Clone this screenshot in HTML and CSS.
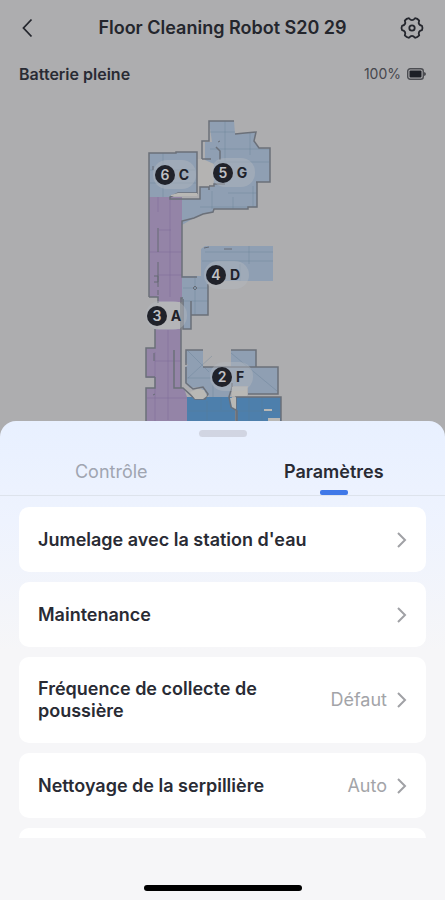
FILE: index.html
```html
<!DOCTYPE html>
<html lang="fr">
<head>
    <meta charset="UTF-8">
    <meta name="viewport" content="width=device-width, initial-scale=1.0">
    <title>Floor Cleaning Robot S20 29</title>
    <link rel="stylesheet" href="styles.css">
</head>
<body>

<div class="app">
    <header class="header">
        <button class="icon-button" aria-label="Retour">
            <svg width="24" height="24" viewBox="0 0 24 24" fill="none" stroke="#24262d" stroke-width="1.800"><path d="M15.500 3.500 7.500 12l8 8.500"/></svg>
        </button>
        <h1>Floor Cleaning Robot S20 29</h1>
        <button class="icon-button" aria-label="Réglages">
            <svg width="24" height="24" viewBox="0 0 24 24" fill="none" stroke="#24262d" stroke-width="1.800" stroke-linejoin="round">
                <path d="M22 9.800Q23 12 22 14.200Q17.500 15.200 19.200 19.400Q17.500 21.500 15 21.800Q12 18 9 21.800Q6.500 21.500 4.800 19.400Q6.500 15.200 2 14.200Q1 12 2 9.800Q6.500 8.800 4.800 4.600Q6.500 2.500 9 2.200Q12 6 15 2.200Q17.500 2.500 19.200 4.600Q17.500 8.800 22 9.800Z"/>
                <circle cx="12" cy="12" r="2.700"/>
            </svg>
        </button>
    </header>

    <div class="status">
        <span class="status-text">Batterie pleine</span>
        <span class="battery">100%
            <svg width="19" height="12" viewBox="0 0 19 12">
                <rect x="0.700" y="0.700" width="15.600" height="10.600" rx="2.500" fill="none" stroke="#4c4d52" stroke-width="1.400"/>
                <rect x="2.500" y="2.500" width="12" height="7" rx="1" fill="#1d1f26"/>
                <path d="M17 4q2 .5 2 2t-2 2z" fill="#4c4d52"/>
            </svg>
        </span>
    </div>

    <div class="map">
        <svg width="161" height="311" viewBox="142 110 161 311" role="img" aria-label="Plan">
            <!-- floor -->
            <path class="gap" d="M197 159h16v27h-16zM158 300h24v30h-24z"/>
            <path class="room" d="M149 153h27v-1h21v41h-19l-8 3v2h-21z"/>
            <path class="room" d="M209 121h25l1 13 10-1 11-1-2 9 5 7 11 1v33h-13v25h-9v2h-34l-1 3-10 2-9 4-12 7v-26h18v-12h14v-23l-9-4v-18h7z"/>
            <path class="room" d="M201 249l4-3h68v35h-65v34h-17v14h-8v-27h-2v-26h20z"/>
            <path class="room" d="M186 350h17v17h28v-17h25v17h22v27h-30v-8h-16l-2 11h-21l-9-10-10 1-5-5v-16l3-2-3-3z"/>
            <path class="hall" d="M149 197h33v105h-24v-5h-9z"/>
            <path class="hall" d="M155 329h26v59h3l3 9v24h-41v-33h9v-10h-9v-30h9z"/>
            <path class="dark" d="M187 397h45v4l3 9v11h-48zM236 397h45v24h-45z"/>

            <!-- floor joints -->
            <path class="joint" d="M210 132h25M210 149h60M217 162h52M228 193h29M200 207h57M225 121v40M250 133v22M212 191v18M233 197v12M253 186v21M163 153v44M150 170h45M150 183h46M205 252h68M202 261h71M183 288h25M183 301h25M195 276v39M249 246v18M240 264v17M187 378h24M187 350l22 22M188 378l24-22M231 353l46 38M213 383v14M249 398v23M262 397v24M207 401v20M221 397v13M188 411h46M237 411h43"/>
            <path class="hall-joint" d="M158 197v15M170 197v100M149 252h33M159 230h12M158 275h24M168 330v90M155 361h26M147 398h40M155 352v69"/>

            <!-- walls -->
            <path class="wall" d="M149 297V153h27v-1h21v41h-19l-8 4v2h30v-12h9v3M202 159v-18h7v-20h25M202 159h9M235 134l10-1 11-1-2 9 5 7h11v34h-14M257 182v25h-9v2h-34l-1 3-10 2-9 4-12 3v56h15M149 297h9v6M209 186h5v-2h11M216 147l4 4v9"/>
            <path class="wall" d="M208 284v31h-17v-14M191 315v14h-8v-30M183 298h-2v90M155 329v19h-9v29h9M155 377v11h-9v33M174 350v38h9l12 11h10l3-5-5-7-10 2-7-6v-16M203 350h-17v15M203 367h53M231 350h25v17h22v27h-30M232 383v4l-3 10 2 10 6 4v10M236 421v-24h45v24"/>
            <path class="furniture" d="M158 228v24M158 262v25M154 276h4v6h-4M158 290v5M204 248l5-1M224 249h8M154 353v8M153 395l2-1M218 142l2-1M153 166v4"/>
            <path class="void" d="M171 195l7-2h19v3h-26zM190 392l8-3 6 1 3 6-4 3h-8zM232 387h15v9h-15zM230 398l2 9 4 2v-12zM264 409h8v2h-8zM268 421v-3h12v3z"/>
            <path class="furniture" d="M195 286l2 2-2 2-2-2z"/>

            <!-- room labels -->
            <g class="labels">
                <rect class="pill" x="153" y="160" width="43" height="29" rx="14"/>
                <rect class="pill" x="211" y="158" width="44" height="29" rx="14"/>
                <rect class="pill" x="204" y="261" width="45" height="28" rx="14"/>
                <rect class="pill" x="146" y="301" width="41" height="29" rx="14"/>
                <rect class="pill" x="210" y="362" width="43" height="29" rx="14"/>
                <circle cx="165" cy="175" r="10"/><text class="number" x="165" y="180">6</text><text x="184" y="180">C</text>
                <circle cx="223" cy="173" r="10"/><text class="number" x="223" y="178">5</text><text x="242" y="178">G</text>
                <circle cx="216" cy="275" r="10"/><text class="number" x="216" y="280">4</text><text x="235" y="280">D</text>
                <circle cx="157" cy="316" r="10"/><text class="number" x="157" y="321">3</text><text x="176" y="321">A</text>
                <circle cx="222" cy="377" r="10"/><text class="number" x="222" y="382">2</text><text x="240" y="382">F</text>
            </g>
        </svg>
    </div>

    <main class="sheet">
        <div class="handle"></div>
        <div class="tabs" role="tablist">
            <button class="tab" role="tab" aria-selected="false">Contrôle</button>
            <button class="tab active" role="tab" aria-selected="true">Paramètres</button>
        </div>
        <div class="list">
            <button class="card">
                <span class="card-title">Jumelage avec la station d'eau</span>
                <svg class="chevron" viewBox="0 0 10 16"><path d="M1 1l7 7-7 7"/></svg>
            </button>
            <button class="card">
                <span class="card-title">Maintenance</span>
                <svg class="chevron" viewBox="0 0 10 16"><path d="M1 1l7 7-7 7"/></svg>
            </button>
            <button class="card">
                <span class="card-title">Fréquence de collecte de poussière</span>
                <span class="card-value">Défaut</span>
                <svg class="chevron" viewBox="0 0 10 16"><path d="M1 1l7 7-7 7"/></svg>
            </button>
            <button class="card">
                <span class="card-title">Nettoyage de la serpillière</span>
                <span class="card-value">Auto</span>
                <svg class="chevron" viewBox="0 0 10 16"><path d="M1 1l7 7-7 7"/></svg>
            </button>
            <div class="card"></div>
        </div>
        <div class="home-bar"></div>
    </main>
</div>

</body>
</html>
```
FILE: styles.css
```css
* {
    box-sizing: border-box;
}
body {
    margin: 0;
    font-family: Inter, "Liberation Sans", sans-serif;
    color: #292b34;
    background-color: #adadaf;
}
button {
    border: none;
    background: none;
    padding: 0;
    font: inherit;
    color: inherit;
    cursor: pointer;
}
.app {
    display: flex;
    flex-direction: column;
    height: 100vh;
}
.header {
    display: flex;
    align-items: center;
    justify-content: space-between;
    height: 55px;
    padding: 0 21px 0 16px;
}
.header h1 {
    flex: 1;
    margin: 0;
    padding-left: 5px;
    text-align: center;
    font-size: 18px;
    font-weight: 600;
    color: #24262d;
}
.icon-button {
    display: flex;
}
.status {
    display: flex;
    align-items: center;
    justify-content: space-between;
    height: 37px;
    padding: 0 19px;
    font-size: 14px;
}
.status-text {
    font-size: 16px;
    font-weight: 600;
}
.battery {
    display: flex;
    align-items: center;
    gap: 6px;
    color: #46474d;
}
.map {
    display: flex;
    justify-content: center;
    padding-top: 18px;
}
.gap {
    fill: #b4b3b2;
}
.room {
    fill: #8f9fb3;
}
.hall {
    fill: #9484a7;
}
.dark {
    fill: #4d7fac;
}
.void {
    fill: #b9b8b5;
}
.joint, .hall-joint, .wall, .furniture {
    fill: none;
}
.joint {
    stroke: #5d7690;
    stroke-opacity: 0.3;
}
.hall-joint {
    stroke: #786795;
    stroke-opacity: 0.4;
}
.wall {
    stroke: #6b7079;
    stroke-width: 1.5;
}
.furniture {
    stroke: #666b75;
}
.pill {
    fill: #b3b8bf;
    fill-opacity: 0.45;
}
.labels {
    font-size: 14px;
    font-weight: 700;
    text-anchor: middle;
    fill: #20222a;
}
.number {
    font-weight: 600;
    fill: #c0c1c5;
}
.sheet {
    flex: 1;
    min-height: 0;
    display: flex;
    flex-direction: column;
    border-radius: 16px 16px 0 0;
    background: #f6f6f8 linear-gradient(#e8f0ff, #eef3fe 100px, #f6f6f8 230px);
}
.handle {
    flex: none;
    width: 48px;
    height: 7px;
    margin: 9px auto 0;
    border-radius: 4px;
    background-color: #d1d5e2;
}
.tabs {
    flex: none;
    display: flex;
    height: 59px;
    border-bottom: 1px solid #dde3ec;
}
.tab {
    position: relative;
    flex: 1;
    padding-top: 10px;
    font-size: 18px;
    color: #a0a5b1;
}
.tab.active {
    font-weight: 600;
    color: #292b34;
}
.tab.active::after {
    content: "";
    position: absolute;
    bottom: 0;
    left: 50%;
    width: 28px;
    height: 5px;
    margin-left: -14px;
    border-radius: 2px;
    background-color: #3f78e8;
}
.list {
    flex: 1;
    min-height: 0;
    display: flex;
    flex-direction: column;
    gap: 10px;
    padding: 11px 19px 0;
    overflow: hidden;
}
.card {
    flex: none;
    display: flex;
    align-items: center;
    gap: 10px;
    min-height: 65px;
    padding: 21px 19px;
    border-radius: 10px;
    background-color: #fff;
    text-align: left;
    font-size: 18px;
    line-height: 22px;
}
.card-title {
    flex: 1;
    padding-right: 40px;
    font-weight: 600;
}
.card-value {
    color: #a3a4a8;
}
.chevron {
    flex: none;
    width: 10px;
    height: 16px;
    fill: none;
    stroke: #a0a1a5;
    stroke-width: 2;
}
.home-bar {
    flex: none;
    width: 158px;
    height: 6px;
    margin: 47px auto 9px;
    border-radius: 3px;
    background-color: #000;
}
```
